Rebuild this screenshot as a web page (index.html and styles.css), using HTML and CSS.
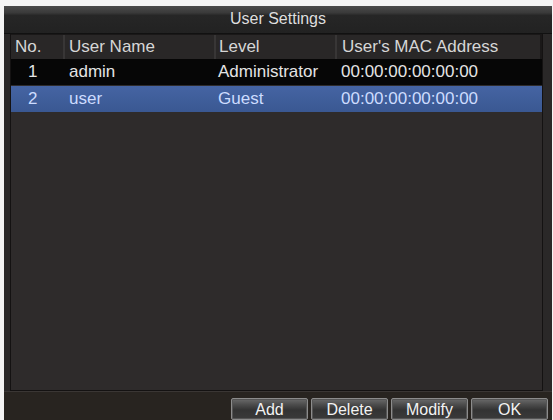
FILE: index.html
```html
<!DOCTYPE html>
<html>
<head>
<meta charset="utf-8">
<link rel="stylesheet" href="styles.css">
</head>
<body>
<div class="screen">
  <div class="title">User Settings</div>
  <div class="panel">
    <div class="row head">
      <div class="c no">No.</div>
      <div class="c name">User Name</div>
      <div class="c level">Level</div>
      <div class="c mac">User's MAC Address</div>
    </div>
    <div class="row data">
      <div class="c no">1</div>
      <div class="c name">admin</div>
      <div class="c level">Administrator</div>
      <div class="c mac">00:00:00:00:00:00</div>
    </div>
    <div class="row data sel">
      <div class="c no">2</div>
      <div class="c name">user</div>
      <div class="c level">Guest</div>
      <div class="c mac">00:00:00:00:00:00</div>
    </div>
  </div>
  <div class="footer">
    <div class="btn">Add</div>
    <div class="btn">Delete</div>
    <div class="btn">Modify</div>
    <div class="btn">OK</div>
  </div>
</div>
</body>
</html>
```
FILE: styles.css
```css
html, body {
  margin: 0;
  padding: 0;
  background: #f4f4f4;
  width: 553px;
  height: 420px;
  overflow: hidden;
}
.screen {
  margin: 6px 1px 0 4px;
  height: 414px;
  background: #2a2828;
  display: flex;
  flex-direction: column;
  font-family: "Liberation Sans", Arial, sans-serif;
  color: #e6e6e6;
}
.title {
  height: 27px;
  line-height: 26px;
  text-align: center;
  font-size: 16px;
  color: #dedede;
  background: linear-gradient(#4a4a4a 0, #3a3a3a 25%, #262626 35%, #222 100%);
  border-bottom: 1px solid #111;
}
.panel {
  margin: 0 9px 0 6px;
  height: 359px;
  background: #2e2b2b;
  border: 1px solid #141212;
  border-top: none;
  box-sizing: border-box;
}
.row {
  display: flex;
  font-size: 17px;
}
.head {
  height: 24px;
  line-height: 24px;
  color: #d6d6d6;
  border-top: 1px solid #1a1818;
}
.head .c {
  background: #292727;
  border-right: 2px solid #383636;
  box-sizing: border-box;
}
.head .c.mac {
  border-right: 2px solid #1a1818;
}
.data {
  height: 26px;
  line-height: 26px;
  margin-bottom: 1px;
  background: #060606;
  color: #e4e4e4;
}
.sel {
  background: linear-gradient(#4564a3, #3a5892);
  color: #cddcff;
}
.c {
  white-space: nowrap;
  overflow: hidden;
}
.no { width: 54px; padding-left: 4px; box-sizing: border-box; }
.name { width: 151px; padding-left: 4px; box-sizing: border-box; }
.level { width: 121px; padding-left: 3px; box-sizing: border-box; }
.mac { flex: 1; padding-left: 5px; box-sizing: border-box; }
.data .no { padding-left: 17px; }
.data .level { padding-left: 2px; }
.data .mac { padding-left: 4px; }
.footer {
  flex: 1;
  background: #282420;
  border-top: 1px solid #3a3634;
  display: flex;
  justify-content: flex-end;
  align-items: flex-start;
  gap: 3px;
  padding: 6px 4px 0 0;
}
.btn {
  width: 75px;
  height: 20px;
  line-height: 21px;
  text-align: center;
  font-size: 16px;
  color: #f2f2f2;
  border: 1px solid #8c8c8c;
  border-radius: 2px;
  background: linear-gradient(#6a6a6a 0, #4a4a4a 30%, #333 55%, #3a3a3a 100%);
  box-shadow: inset 0 0 0 1px #555;
}
```
